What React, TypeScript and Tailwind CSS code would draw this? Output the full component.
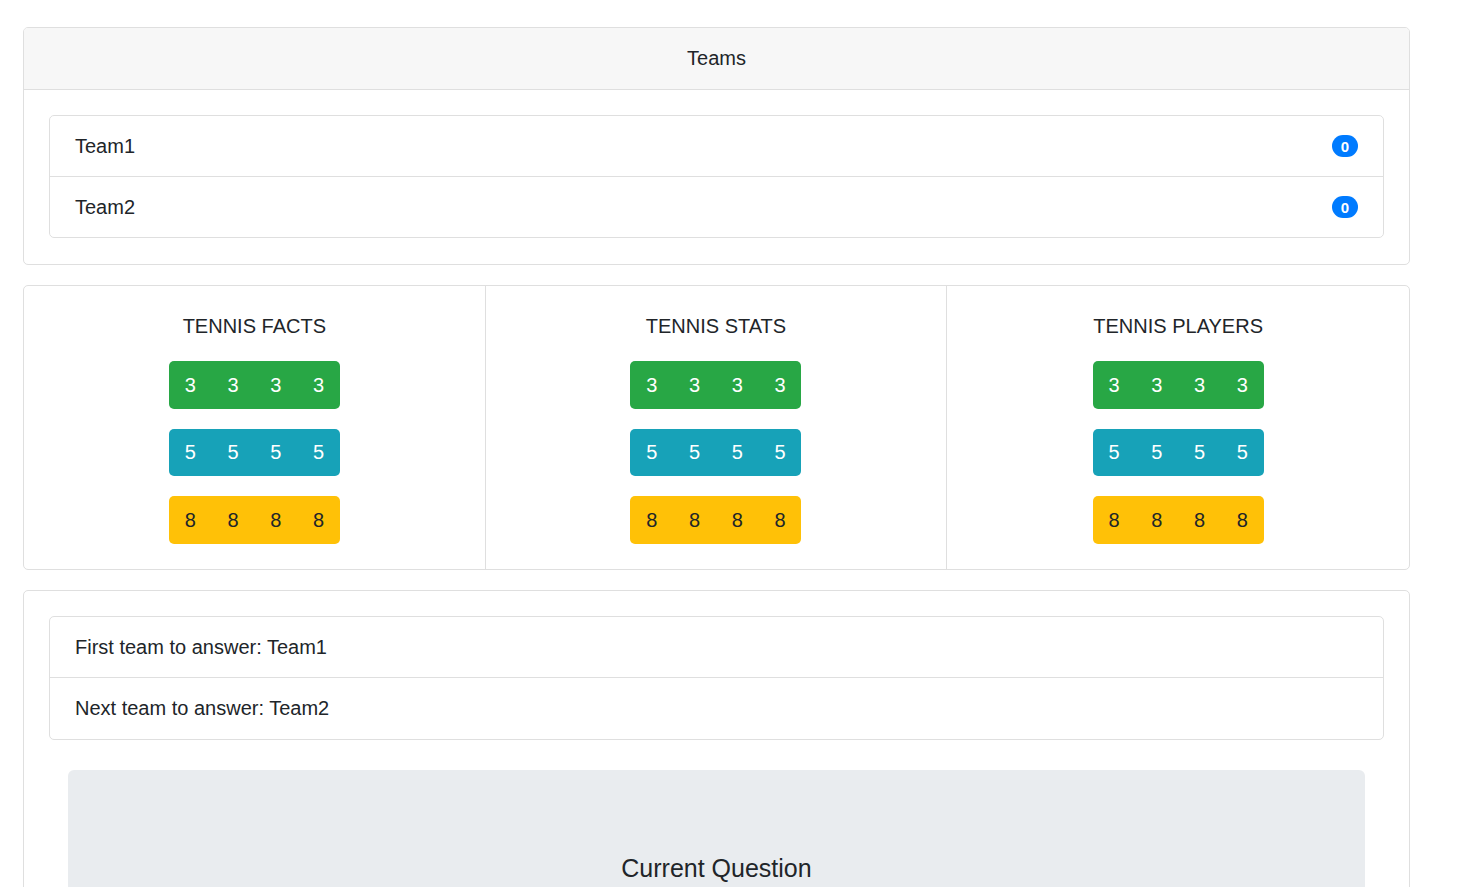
const teams = [
  { name: 'Team1', score: 0 },
  { name: 'Team2', score: 0 },
]

const categories = ['TENNIS FACTS', 'TENNIS STATS', 'TENNIS PLAYERS']

const rows = [
  { value: 3, cls: 'bg-[#28a745] text-white' },
  { value: 5, cls: 'bg-[#17a2b8] text-white' },
  { value: 8, cls: 'bg-[#ffc107] text-[#212529]' },
]

function Category({ title }: { title: string }) {
  return (
    <div className="flex flex-col items-center px-[25px] pt-[25px] pb-[25px]">
      <h5 className="text-[20px] leading-[30px] mb-[20px]">{title}</h5>
      <div className="flex flex-col gap-[20px]">
        {rows.map((row) => (
          <div
            key={row.value}
            className={`grid grid-cols-4 w-[171px] h-[47.5px] items-center rounded-[5px] text-[20px] leading-[30px] ${row.cls}`}
          >
            {[0, 1, 2, 3].map((i) => (
              <span key={i} className="text-center">
                {row.value}
              </span>
            ))}
          </div>
        ))}
      </div>
    </div>
  )
}

export default function App() {
  return (
    <div
      className="min-h-screen bg-white text-[#212529] text-[20px] leading-[30px] pt-[27px] pl-[23px]"
      style={{ fontFamily: '"Liberation Sans", Arial, sans-serif' }}
    >
      <div className="w-[1387px] flex flex-col gap-[20px]">
        {/* teams */}
        <div className="border border-[#dfdfdf] rounded-[5px] overflow-hidden">
          <div className="bg-[#f7f7f7] border-b border-[#dfdfdf] pt-[15px] pb-[16px] text-center">Teams</div>
          <div className="px-[25px] pt-[25px] pb-[26px]">
            <ul className="border border-[#dfdfdf] rounded-[5px] divide-y divide-[#dfdfdf]">
              {teams.map((t) => (
                <li key={t.name} className="flex items-center justify-between px-[25px] py-[15px]">
                  <span>{t.name}</span>
                  <span className="bg-[#007bff] text-white text-[15px] leading-none font-bold rounded-full px-[9px] py-[3.5px]">
                    {t.score}
                  </span>
                </li>
              ))}
            </ul>
          </div>
        </div>

        {/* board */}
        <div className="grid grid-cols-3 border border-[#dfdfdf] rounded-[5px] divide-x divide-[#dfdfdf]">
          {categories.map((c) => (
            <Category key={c} title={c} />
          ))}
        </div>

        {/* turn */}
        <div className="border border-[#dfdfdf] rounded-t-[5px] px-[25px] pt-[25px]">
          <ul className="border border-[#dfdfdf] rounded-[5px] divide-y divide-[#dfdfdf]">
            <li className="px-[25px] py-[15px]">First team to answer: Team1</li>
            <li className="px-[25px] pt-[15px] pb-[16px]">Next team to answer: Team2</li>
          </ul>
          <div className="mx-[19px] mt-[30px] bg-[#e9ecef] rounded-[6px] pt-[83px] pb-[80px] text-center">
            <h4 className="text-[25px] leading-[30px]">Current Question</h4>
          </div>
        </div>
      </div>
    </div>
  )
}
